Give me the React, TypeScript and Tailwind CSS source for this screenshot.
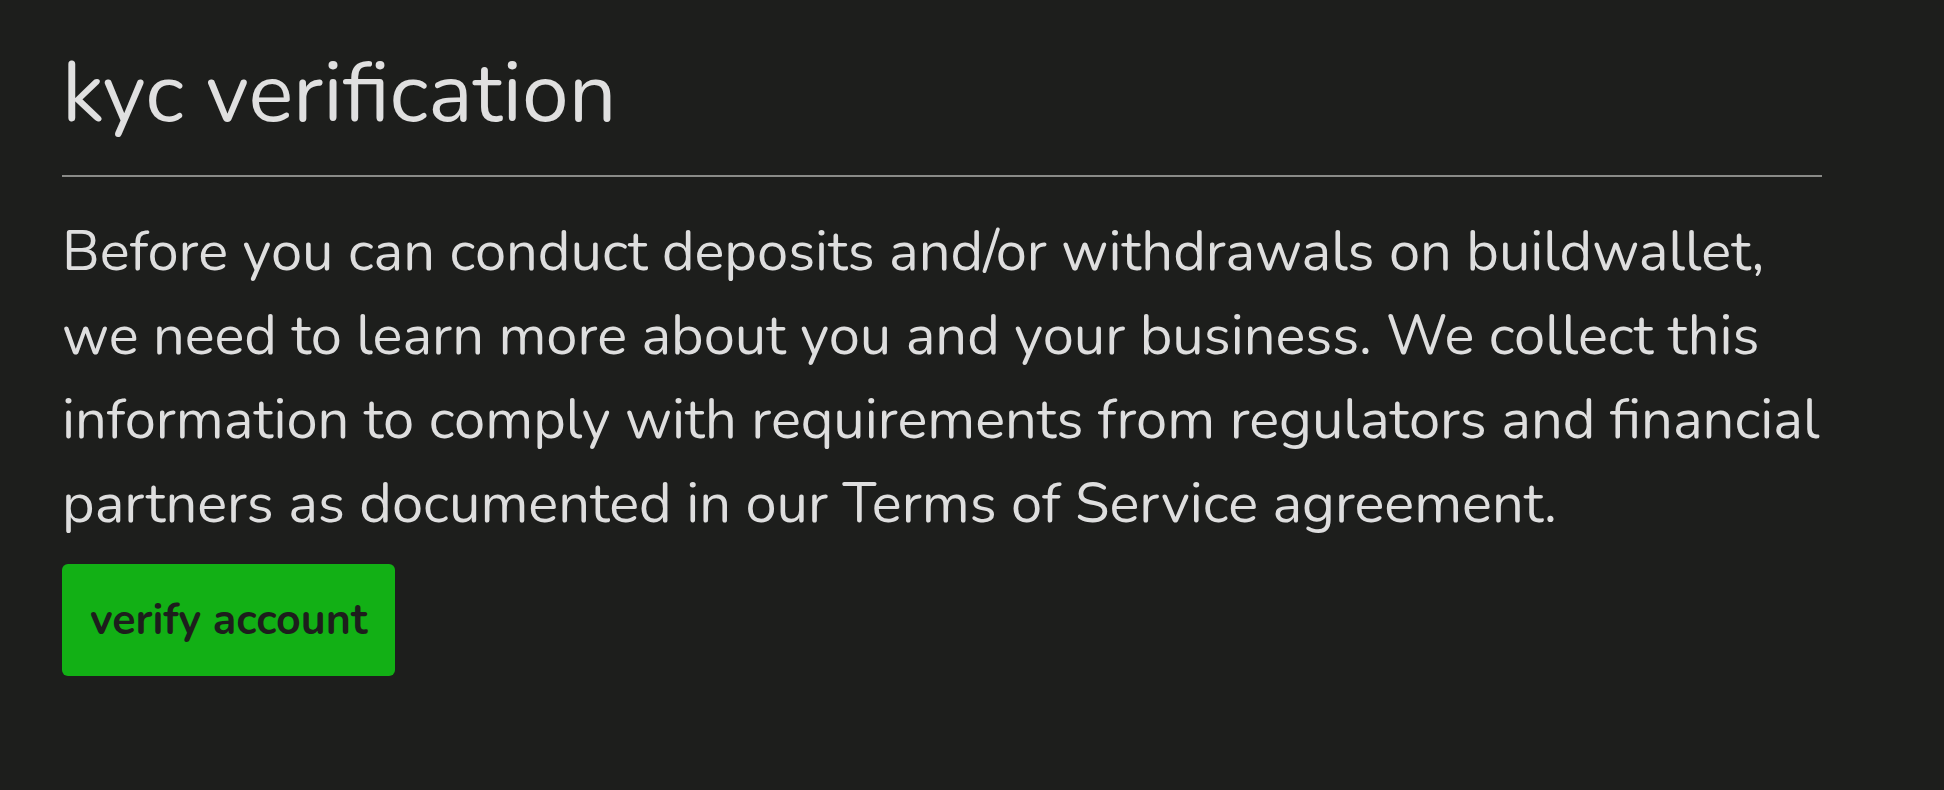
export default function App() {
  return (
    <div
      className="min-h-screen w-full bg-[#1d1e1c] px-[62px] pt-[46px] text-[#e0e0e0]"
      style={{ fontFamily: '"Nunito", "Open Sans", sans-serif' }}
    >
      <div className="max-w-[1760px]">
        {/* Page title */}
        <h1 className="text-[84px] font-normal leading-[96px]">kyc verification</h1>
        <hr className="mt-[33px] border-0 border-t-2 border-[#8a8b88]" />

        <p className="mt-[33px] text-[56px] leading-[84px] text-[#dedede]">
          Before you can conduct deposits and/or withdrawals on buildwallet, we need to learn more about you
          and your business. We collect this information to comply with requirements from regulators and
          financial partners as documented in our Terms of Service agreement.
        </p>

        <button
          type="button"
          className="mt-[18px] h-[112px] rounded-md bg-[#12b015] px-[28px] text-[43px] font-bold text-[#1d1e1c]"
        >
          verify account
        </button>
      </div>
    </div>
  );
}
